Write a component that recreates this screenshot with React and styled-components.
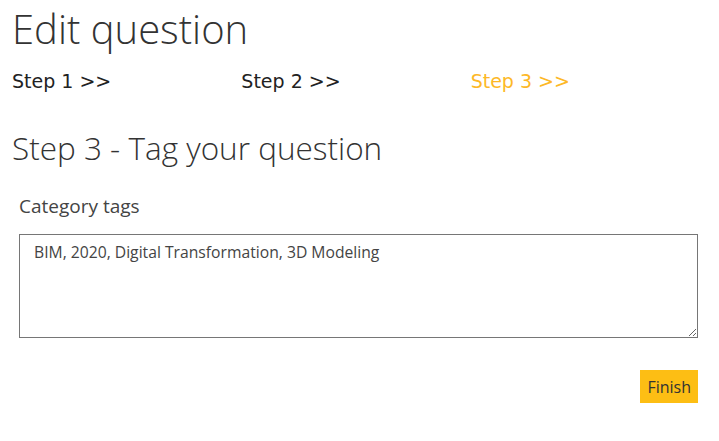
import React from 'react';
import styled, { createGlobalStyle } from 'styled-components';

const GlobalStyle = createGlobalStyle`
body {
  margin: 0;
  background: #fff;
  font-family: "Open Sans", sans-serif;
}
`;

const steps = ['Step 1 >>', 'Step 2 >>', 'Step 3 >>'];

function App() {
  const current = 2;

  return (
    <Page>
      <GlobalStyle />
      <Title>Edit question</Title>
      <StepRow>
        {steps.map((s, i) => (
          <StepLabel key={i} $active={i === current}>{s}</StepLabel>
        ))}
      </StepRow>

      <SubTitle>Step 3 - Tag your question</SubTitle>

      <Form>
        <FieldLabel htmlFor="tags">Category tags</FieldLabel>
        <TagsInput
          id="tags"
          defaultValue="BIM, 2020, Digital Transformation, 3D Modeling"
        />
        <Actions>
          <FinishButton>Finish</FinishButton>
        </Actions>
      </Form>
    </Page>
  );
}

const Page = styled.div`
width: 688px;
padding: 0 12px;
`;

const Title = styled.h1`
margin: 0;
padding-top: 1px;
font-family: "Open Sans", sans-serif;
font-weight: 300;
font-size: 40px;
line-height: 56px;
color: #333;
`;

const StepRow = styled.div`
display: grid;
grid-template-columns: repeat(3, 1fr);
margin-top: 13px;
`;

const StepLabel = styled.div`
font-family: "DejaVu Sans", Verdana, sans-serif;
font-size: 19px;
line-height: 22px;
white-space: pre;
color: ${(p) => (p.$active ? '#fdb827' : '#222')};
`;

const SubTitle = styled.h2`
margin: 36px 0 0;
font-family: "Open Sans", sans-serif;
font-weight: 300;
font-size: 31.5px;
line-height: 40px;
color: #333;
`;

const Form = styled.div`
padding-left: 7px;
margin-top: 25px;
`;

const FieldLabel = styled.label`
display: block;
font-size: 19px;
line-height: 26px;
color: #444;
`;

const TagsInput = styled.textarea`
display: block;
box-sizing: border-box;
width: 679px;
height: 104px;
margin-top: 15px;
padding: 6px 14px;
border: 1px solid #767676;
font-family: "Open Sans", sans-serif;
font-size: 15.7px;
line-height: 22px;
color: #444;
resize: vertical;
outline: none;
`;

const Actions = styled.div`
display: flex;
justify-content: flex-end;
width: 679px;
margin-top: 32px;
`;

const FinishButton = styled.button`
height: 33px;
padding: 0 7px;
border: none;
background: #fdbe14;
font-family: "Open Sans", sans-serif;
font-size: 16px;
color: #333;
cursor: pointer;
`;

export default App;
